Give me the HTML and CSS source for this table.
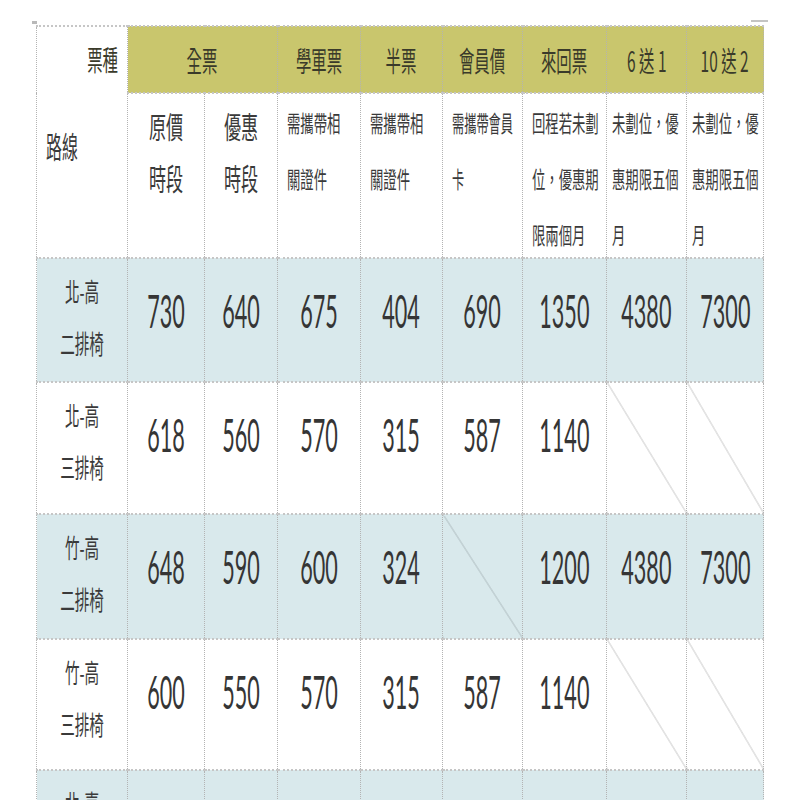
FILE: index.html
```html
<!DOCTYPE html>
<html lang="zh-Hant">
<head>
<meta charset="utf-8">
<title>票價表</title>
<link rel="stylesheet" href="styles.css">
</head>
<body>
<div class="page">
  <span class="mark-left"></span>
  <span class="mark-right"></span>
  <table class="fares">
    <colgroup>
      <col class="c-route"><col class="c1"><col class="c2"><col class="c3"><col class="c4"><col class="c5"><col class="c6"><col class="c7"><col class="c8">
    </colgroup>
    <tr class="r-head">
      <td class="corner" rowspan="2">
        <div class="corner-top"><span class="sq-r hd">票種</span></div>
        <div class="corner-bottom"><span class="sq-l rt">路線</span></div>
      </td>
      <th colspan="2"><span class="sq hd">全票</span></th>
      <th><span class="sq hd">學軍票</span></th>
      <th><span class="sq hd">半票</span></th>
      <th><span class="sq hd">會員價</span></th>
      <th><span class="sq hd">來回票</span></th>
      <th><span class="sq hd">6 送 1</span></th>
      <th><span class="sq hd">10 送 2</span></th>
    </tr>
    <tr class="r-sub">
      <td class="sub-big"><span class="sq sb">原價<br>時段</span></td>
      <td class="sub-big"><span class="sq sb">優惠<br>時段</span></td>
      <td class="note"><span class="sq-l nt">需攜帶相<br>關證件</span></td>
      <td class="note"><span class="sq-l nt">需攜帶相<br>關證件</span></td>
      <td class="note"><span class="sq-l nt nt-tight">需攜帶會員<br>卡</span></td>
      <td class="note"><span class="sq-l nt">回程若未劃<br>位，優惠期<br>限兩個月</span></td>
      <td class="note note-n"><span class="sq-l nt">未劃位，優<br>惠期限五個<br>月</span></td>
      <td class="note note-n"><span class="sq-l nt">未劃位，優<br>惠期限五個<br>月</span></td>
    </tr>
    <tr class="row blue r1">
      <td class="route"><span class="sq rl">北-高<br>二排椅</span></td>
      <td class="num"><span class="sq nm">730</span></td>
      <td class="num"><span class="sq nm">640</span></td>
      <td class="num"><span class="sq nm">675</span></td>
      <td class="num"><span class="sq nm">404</span></td>
      <td class="num"><span class="sq nm">690</span></td>
      <td class="num"><span class="sq nm">1350</span></td>
      <td class="num"><span class="sq nm">4380</span></td>
      <td class="num"><span class="sq nm">7300</span></td>
    </tr>
    <tr class="row r2">
      <td class="route"><span class="sq rl">北-高<br>三排椅</span></td>
      <td class="num"><span class="sq nm">618</span></td>
      <td class="num"><span class="sq nm">560</span></td>
      <td class="num"><span class="sq nm">570</span></td>
      <td class="num"><span class="sq nm">315</span></td>
      <td class="num"><span class="sq nm">587</span></td>
      <td class="num"><span class="sq nm">1140</span></td>
      <td class="num slash"></td>
      <td class="num slash"></td>
    </tr>
    <tr class="row blue r3">
      <td class="route"><span class="sq rl">竹-高<br>二排椅</span></td>
      <td class="num"><span class="sq nm">648</span></td>
      <td class="num"><span class="sq nm">590</span></td>
      <td class="num"><span class="sq nm">600</span></td>
      <td class="num"><span class="sq nm">324</span></td>
      <td class="num slash"></td>
      <td class="num"><span class="sq nm">1200</span></td>
      <td class="num"><span class="sq nm">4380</span></td>
      <td class="num"><span class="sq nm">7300</span></td>
    </tr>
    <tr class="row r4">
      <td class="route"><span class="sq rl">竹-高<br>三排椅</span></td>
      <td class="num"><span class="sq nm">600</span></td>
      <td class="num"><span class="sq nm">550</span></td>
      <td class="num"><span class="sq nm">570</span></td>
      <td class="num"><span class="sq nm">315</span></td>
      <td class="num"><span class="sq nm">587</span></td>
      <td class="num"><span class="sq nm">1140</span></td>
      <td class="num slash"></td>
      <td class="num slash"></td>
    </tr>
    <tr class="row blue r5">
      <td class="route"><span class="sq rl">北-嘉<br>二排椅</span></td>
      <td class="num"><span class="sq nm">500</span></td>
      <td class="num"><span class="sq nm">450</span></td>
      <td class="num"><span class="sq nm">460</span></td>
      <td class="num"><span class="sq nm">250</span></td>
      <td class="num"><span class="sq nm">470</span></td>
      <td class="num"><span class="sq nm">900</span></td>
      <td class="num"><span class="sq nm">3000</span></td>
      <td class="num"><span class="sq nm">5000</span></td>
    </tr>
  </table>
</div>
</body>
</html>
```

FILE: styles.css
```css
html, body {
  margin: 0;
  padding: 0;
  background: #ffffff;
  overflow: hidden;
}

.page {
  position: relative;
  padding: 25px 0 0 36px;
  color: #3a3a3a;
  font-family: "Noto Sans CJK TC", "Noto Sans CJK SC", sans-serif;
}

.mark-left {
  position: absolute;
  left: 32px;
  top: 21px;
  width: 5px;
  height: 3px;
  background: #b9b9b9;
}

.mark-right {
  position: absolute;
  left: 751px;
  top: 20px;
  width: 17px;
  height: 2px;
  background: #c4c4c4;
}

.fares {
  border-collapse: collapse;
  table-layout: fixed;
  width: 727px;
}

.c-route { width: 91px; }
.c1 { width: 77px; }
.c2 { width: 73px; }
.c3 { width: 83px; }
.c4 { width: 82px; }
.c5 { width: 80px; }
.c6 { width: 84px; }
.c7 { width: 80px; }
.c8 { width: 77px; }

.fares td, .fares th {
  border-left: 1px dotted #b3b3b3;
  border-right: 1px dotted #b3b3b3;
  border-top: 2px dotted #c6c6c6;
  border-bottom: 2px dotted #c6c6c6;
  padding: 0;
  font-weight: normal;
  white-space: nowrap;
  overflow: visible;
}

/* squeezed text helpers */
.sq, .sq-l, .sq-r {
  display: inline-block;
  white-space: nowrap;
}
.sq {
  transform-origin: center top;
  margin: 0 -60px;
}
.sq-l { transform-origin: left top; }
.sq-r { transform-origin: right top; }

/* header row */
.r-head { height: 67px; }
.r-head th {
  background: #c9c66d;
  text-align: center;
  vertical-align: middle;
}
.hd {
  font-size: 28px;
  line-height: 34px;
  transform: scaleX(0.55);
  color: #3a3a2a;
}

.corner {
  vertical-align: top;
  background: #ffffff;
}
.corner-top {
  text-align: right;
  padding: 15px 9px 0 0;
  height: 34px;
}
.corner-bottom {
  padding: 52px 0 0 9px;
}
.rt {
  font-size: 30px;
  line-height: 34px;
  transform: scaleX(0.53);
}

/* sub header */
.r-sub { height: 165px; }
.r-sub td {
  vertical-align: top;
  background: #ffffff;
}
.fares .sub-big { text-align: center; padding-top: 5px; }
.sb {
  font-size: 30px;
  line-height: 52px;
  transform: scaleX(0.57);
}
.fares .note { text-align: left; padding-left: 9px; }
.fares .note-n { padding-left: 5px; }
.nt {
  font-size: 23px;
  line-height: 56px;
  transform: scaleX(0.58);
  margin-bottom: -30px;
}
.nt-tight { transform: scaleX(0.53); }

/* body rows */
.r1 { height: 124px; }
.r2 { height: 132px; }
.r3 { height: 125px; }
.r4 { height: 131px; }
.r5 { height: 130px; }

.row td {
  vertical-align: top;
  text-align: center;
  background-color: #ffffff;
}
.row.blue td { background-color: #d9e9ec; }

.fares .route { padding-top: 6px; }
.rl {
  font-size: 26px;
  line-height: 52px;
  transform: scaleX(0.56);
}

.fares .num { padding-top: 27px; }
.nm {
  font-family: "Lato", "Noto Sans", sans-serif;
  font-size: 46px;
  line-height: 50px;
  transform: scaleX(0.47);
  color: #353535;
}

.row td.slash {
  background-image: linear-gradient(to top right,
    transparent calc(50% - 0.8px),
    #c3c3c3 50%,
    transparent calc(50% + 0.8px));
}
.row.blue td.slash {
  background-image: linear-gradient(to top right,
    transparent calc(50% - 0.8px),
    #aab8bb 50%,
    transparent calc(50% + 0.8px));
}
```
